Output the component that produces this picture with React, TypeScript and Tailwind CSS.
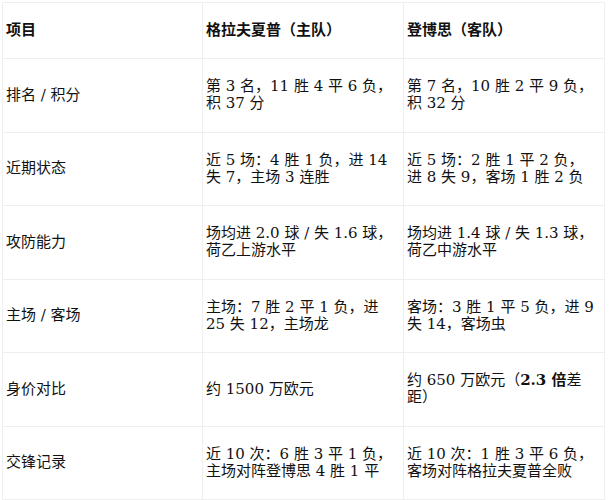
import React from 'react';

const rows: { label: string; home: React.ReactNode; away: React.ReactNode }[] = [
  {
    label: '排名 / 积分',
    home: '第 3 名，11 胜 4 平 6 负，积 37 分',
    away: '第 7 名，10 胜 2 平 9 负，积 32 分',
  },
  {
    label: '近期状态',
    home: '近 5 场：4 胜 1 负，进 14 失 7，主场 3 连胜',
    away: '近 5 场：2 胜 1 平 2 负，进\u00a08 失 9，客场 1 胜 2 负',
  },
  {
    label: '攻防能力',
    home: '场均进 2.0 球 / 失 1.6 球，荷乙上游水平',
    away: '场均进 1.4 球 / 失 1.3 球，荷乙中游水平',
  },
  {
    label: '主场 / 客场',
    home: '主场：7 胜 2 平 1 负，进 25 失 12，主场龙',
    away: '客场：3 胜 1 平 5 负，进 9 失 14，客场虫',
  },
  {
    label: '身价对比',
    home: '约 1500 万欧元',
    away: (
      <>
        约 650 万欧元（<b className="font-bold">2.3 倍</b>差距）
      </>
    ),
  },
  {
    label: '交锋记录',
    home: '近 10 次：6 胜 3 平 1 负，主场对阵登博思 4 胜 1 平',
    away: '近 10 次：1 胜 3 平 6 负，客场对阵格拉夫夏普全败',
  },
];

function App() {
  return (
    <div className="w-[609px] h-[500px] bg-white pt-[2px] pl-[2px] text-[15px] leading-[17px] text-[#111] font-['DejaVu_Serif','Noto_Sans_CJK_SC',serif]">
      <table className="w-[603px] table-fixed border-collapse">
        <colgroup>
          <col className="w-[200px]" />
          <col className="w-[201px]" />
          <col />
        </colgroup>
        <thead>
          <tr className="h-[56px]">
            <th className="border border-[#efefef] px-[3px] text-left font-bold align-middle">
              项目
            </th>
            <th className="border border-[#efefef] px-[3px] text-left font-bold align-middle">
              格拉夫夏普（主队）
            </th>
            <th className="border border-[#efefef] px-[3px] text-left font-bold align-middle">
              登博思（客队）
            </th>
          </tr>
        </thead>
        <tbody>
          {rows.map((r) => (
            <tr key={r.label} className="h-[73.5px]">
              <td className="border border-[#efefef] px-[3px] align-middle">{r.label}</td>
              <td className="border border-[#efefef] px-[3px] align-middle">{r.home}</td>
              <td className="border border-[#efefef] px-[3px] align-middle">{r.away}</td>
            </tr>
          ))}
        </tbody>
      </table>
    </div>
  );
}

export default App;
